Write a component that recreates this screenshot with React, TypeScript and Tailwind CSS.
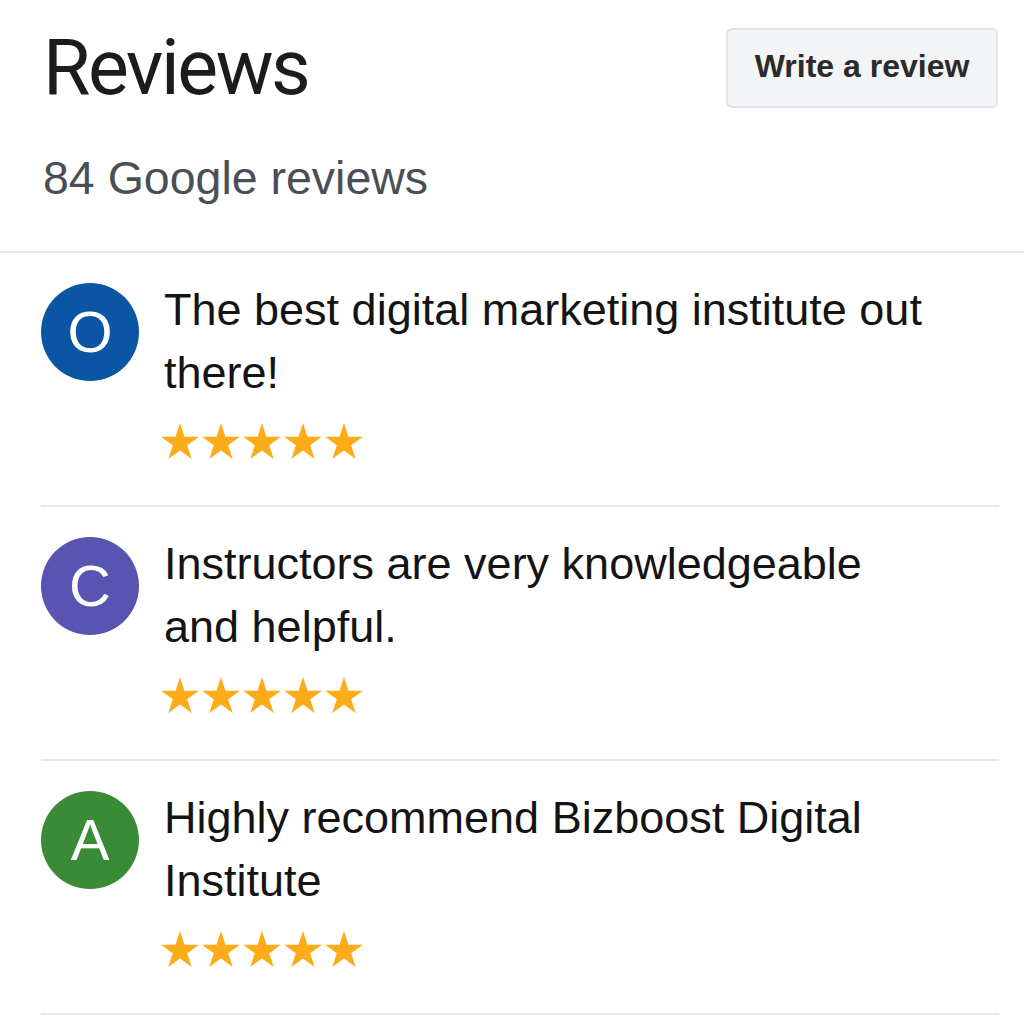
import { Fragment } from "react";

const reviews = [
  { initial: "O", color: "bg-[#0a56a4]", text: "The best digital marketing institute out there!" },
  { initial: "C", color: "bg-[#5953b1]", text: "Instructors are very knowledgeable and helpful." },
  { initial: "A", color: "bg-[#3b8a37]", text: "Highly recommend Bizboost Digital Institute" },
];

function Star() {
  return (
    <svg width="38" height="36" viewBox="0.49 0 19.02 18.09" className="shrink-0">
      <polygon
        fill="#fbac18"
        points="10,0 12.25,6.91 19.51,6.91 13.63,11.18 15.88,18.09 10,13.82 4.12,18.09 6.37,11.18 0.49,6.91 7.75,6.91"
      />
    </svg>
  );
}

export default function App() {
  return (
    <div className="w-[1024px] h-[1024px] overflow-hidden bg-white font-['Liberation_Sans',Arial,sans-serif]">
      <div className="pl-[43px] pr-[26px] pt-[28px] pb-[50px] border-b-2 border-[#e3e6ea]">
        <div className="flex items-start justify-between">
          <h1 className="mt-[2px] font-['Roboto',sans-serif] text-[77px] leading-[77px] tracking-[-2.4px] text-[#1c1c1c] font-normal">
            Reviews
          </h1>
          <button className="w-[272px] h-[80px] pb-[4px] rounded-[6px] border-2 border-[#e0e3e7] bg-[#f3f4f5] text-[32px] font-bold text-[#2b2b2b]">
            Write a review
          </button>
        </div>
        <p className="mt-[47px] text-[46.5px] leading-[46px] text-[#4a4f55]">84 Google reviews</p>
      </div>

      <div className="pl-[41px] pr-[25px]">
        {reviews.map((r) => (
          <Fragment key={r.initial}>
            <div className="flex items-start gap-[25px] pt-[25px] pb-[46px] border-b-2 border-[#e3e6ea]">
              <div className={`mt-[5px] w-[98px] h-[98px] shrink-0 rounded-full ${r.color} flex items-center justify-center text-white text-[58px] leading-none`}>
                {r.initial}
              </div>
              <div className="max-w-[775px]">
                <p className="text-[45px] leading-[63px] text-[#141414]">{r.text}</p>
                <div className="mt-[19px] flex gap-[3px] -ml-[3px]">
                  <Star />
                  <Star />
                  <Star />
                  <Star />
                  <Star />
                </div>
              </div>
            </div>
          </Fragment>
        ))}
      </div>
    </div>
  );
}
